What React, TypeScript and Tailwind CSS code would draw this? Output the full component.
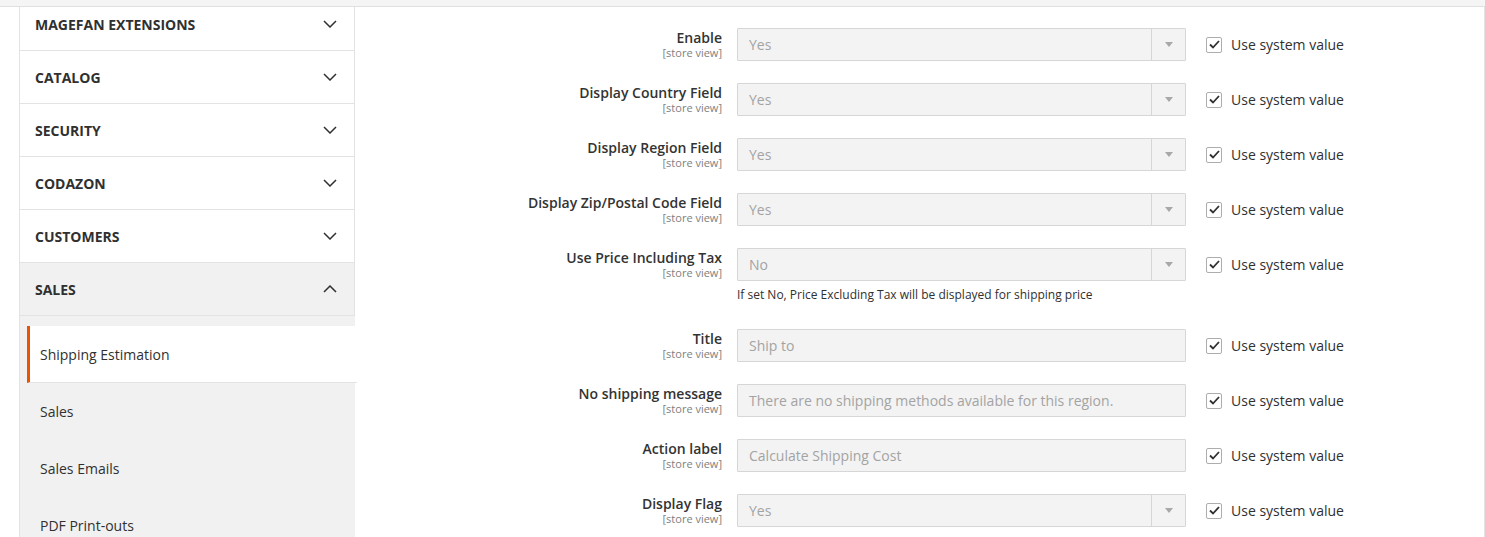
import React from "react";

const FONT = { fontFamily: '"Open Sans", "Noto Sans", "Liberation Sans", sans-serif' };

type Field = {
  label: string;
  value: string;
  select?: boolean;
  note?: string;
};

const FIELDS: Field[] = [
  { label: "Enable", value: "Yes", select: true },
  { label: "Display Country Field", value: "Yes", select: true },
  { label: "Display Region Field", value: "Yes", select: true },
  { label: "Display Zip/Postal Code Field", value: "Yes", select: true },
  {
    label: "Use Price Including Tax",
    value: "No",
    select: true,
    note: "If set No, Price Excluding Tax will be displayed for shipping price",
  },
  { label: "Title", value: "Ship to" },
  { label: "No shipping message", value: "There are no shipping methods available for this region." },
  { label: "Action label", value: "Calculate Shipping Cost" },
  { label: "Display Flag", value: "Yes", select: true },
];

const SECTIONS = ["MAGEFAN EXTENSIONS", "CATALOG", "SECURITY", "CODAZON", "CUSTOMERS"];

function Chevron({ up = false }: { up?: boolean }) {
  return (
    <svg width="14" height="8" viewBox="0 0 14 8" fill="none" className={up ? "rotate-180" : ""}>
      <polyline points="1,1 7,7 13,1" stroke="#303030" strokeWidth="1.5" strokeLinejoin="miter" />
    </svg>
  );
}

function Checkbox() {
  return (
    <span className="flex h-[16px] w-[16px] items-center justify-center rounded-[2px] border border-[#adadad] bg-white">
      <svg width="11" height="9" viewBox="0 0 11 9" fill="none">
        <polyline points="1,4.5 4,7.5 10,1" stroke="#303030" strokeWidth="1.8" />
      </svg>
    </span>
  );
}

function FieldRow({ field }: { field: Field }) {
  return (
    <div className={`flex items-start ${field.note ? "mb-[26px]" : "mb-[22px]"}`}>
      <div className="w-[382px] pr-[15px] pt-[1px] text-right">
        <div className="text-[14px] font-semibold leading-[18px] text-[#333333]">{field.label}</div>
        <div className="text-[11px] leading-[12px] text-[#808080]">[store view]</div>
      </div>
      <div className="w-[449px]">
        <div className="flex h-[33px] items-center rounded-[1px] border border-[#d6d6d6] bg-[#f3f3f3]">
          <span className="flex-1 truncate pl-[11px] text-[14px] text-[#a3a3a3]">{field.value}</span>
          {field.select && (
            <span className="flex h-full w-[34px] items-center justify-center border-l border-[#d6d6d6]">
              <svg width="8" height="5" viewBox="0 0 8 5">
                <polygon points="0,0 8,0 4,5" fill="#a8a8a8" />
              </svg>
            </span>
          )}
        </div>
        {field.note && (
          <div className="mt-[5px] text-[12px] leading-[17px] text-[#303030]">{field.note}</div>
        )}
      </div>
      <label className="ml-[20px] flex h-[33px] items-center gap-[9px]">
        <Checkbox />
        <span className="text-[14px] text-[#303030]">Use system value</span>
      </label>
    </div>
  );
}

export default function App() {
  return (
    <div className="relative min-h-[537px] overflow-hidden bg-white" style={FONT}>
      <div className="absolute left-0 right-0 top-0 z-10 h-[7px] border-b border-[#e0e0e0] bg-[#f5f5f5]" />
      <div className="absolute bottom-0 right-0 top-0 w-[1px] bg-[#e3e3e3]" />

      <div className="flex">
        <div className="ml-[19px] mt-[-2px] w-[336px] shrink-0">
          <div className="border-x border-[#e3e3e3]">
            {SECTIONS.map(s => (
              <div key={s} className="flex h-[53px] items-center justify-between border-b border-[#e3e3e3] pl-[15px] pr-[17px]">
                <span className="text-[14px] font-bold text-[#303030]">{s}</span>
                <Chevron />
              </div>
            ))}
            <div className="flex h-[53px] items-center justify-between border-b border-[#e3e3e3] bg-[#f1f1f1] pl-[15px] pr-[17px]">
              <span className="text-[14px] font-bold text-[#303030]">SALES</span>
              <Chevron up />
            </div>
          </div>
          <div className="border-l border-[#e3e3e3] bg-[#f1f1f1] pt-[10px]">
            <div className="ml-[7px] mr-[-2px] flex h-[57px] items-center border-b border-[#e3e3e3] border-l-[3px] border-l-[#eb5202] bg-white pl-[10px]">
              <span className="text-[14px] text-[#303030]">Shipping Estimation</span>
            </div>
            {["Sales", "Sales Emails", "PDF Print-outs"].map(s => (
              <div key={s} className="flex h-[57px] items-center pl-[20px]">
                <span className="text-[14px] text-[#303030]">{s}</span>
              </div>
            ))}
          </div>
        </div>

        <div className="flex-1 pt-[28px]">
          {FIELDS.map(f => (
            <FieldRow key={f.label} field={f} />
          ))}
        </div>
      </div>
    </div>
  );
}
